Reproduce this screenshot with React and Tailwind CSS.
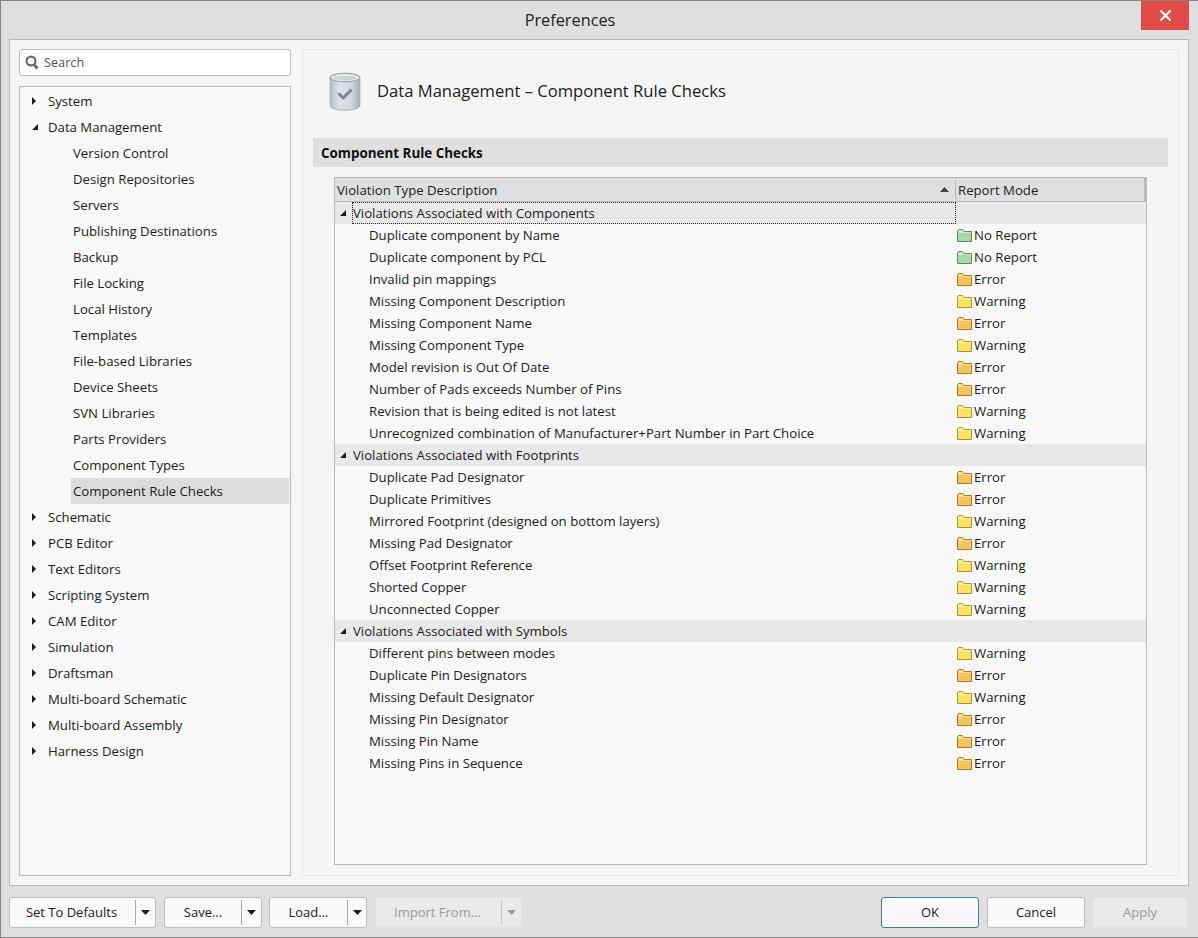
import React from "react";

const FONT = "font-['Open_Sans','Noto_Sans',sans-serif]";

const tree = [
  ["System", 0, "r"],
  ["Data Management", 0, "d"],
  ["Version Control", 1],
  ["Design Repositories", 1],
  ["Servers", 1],
  ["Publishing Destinations", 1],
  ["Backup", 1],
  ["File Locking", 1],
  ["Local History", 1],
  ["Templates", 1],
  ["File-based Libraries", 1],
  ["Device Sheets", 1],
  ["SVN Libraries", 1],
  ["Parts Providers", 1],
  ["Component Types", 1],
  ["Component Rule Checks", 1, null, true],
  ["Schematic", 0, "r"],
  ["PCB Editor", 0, "r"],
  ["Text Editors", 0, "r"],
  ["Scripting System", 0, "r"],
  ["CAM Editor", 0, "r"],
  ["Simulation", 0, "r"],
  ["Draftsman", 0, "r"],
  ["Multi-board Schematic", 0, "r"],
  ["Multi-board Assembly", 0, "r"],
  ["Harness Design", 0, "r"],
];

const groups = [
  ["Violations Associated with Components", [
    ["Duplicate component by Name", "N"],
    ["Duplicate component by PCL", "N"],
    ["Invalid pin mappings", "E"],
    ["Missing Component Description", "W"],
    ["Missing Component Name", "E"],
    ["Missing Component Type", "W"],
    ["Model revision is Out Of Date", "E"],
    ["Number of Pads exceeds Number of Pins", "E"],
    ["Revision that is being edited is not latest", "W"],
    ["Unrecognized combination of Manufacturer+Part Number in Part Choice", "W"],
  ]],
  ["Violations Associated with Footprints", [
    ["Duplicate Pad Designator", "E"],
    ["Duplicate Primitives", "E"],
    ["Mirrored Footprint (designed on bottom layers)", "W"],
    ["Missing Pad Designator", "E"],
    ["Offset Footprint Reference", "W"],
    ["Shorted Copper", "W"],
    ["Unconnected Copper", "W"],
  ]],
  ["Violations Associated with Symbols", [
    ["Different pins between modes", "W"],
    ["Duplicate Pin Designators", "E"],
    ["Missing Default Designator", "W"],
    ["Missing Pin Designator", "E"],
    ["Missing Pin Name", "E"],
    ["Missing Pins in Sequence", "E"],
  ]],
];

const modes = {
  N: { label: "No Report", fill: "#a9d8a4", top: "#cbe9c7", line: "#5c8a60" },
  E: { label: "Error", fill: "#f9c459", top: "#fddc8e", line: "#a87a22" },
  W: { label: "Warning", fill: "#fbe35e", top: "#fdf09a", line: "#a8962a" },
};

function Folder({ mode }) {
  const m = modes[mode];
  return (
    <svg width="15" height="13" viewBox="0 0 15 13" className="shrink-0">
      <path d="M0.5 12.5V1.5L1.5 0.5H5.5L7 2.5H14.5V12.5Z" fill={m.fill} stroke={m.line} strokeWidth="1" />
      <path d="M1 4H14V3H6.8L5.3 1H1.7L1 1.7Z" fill={m.top} />
    </svg>
  );
}

function ArrowRight() {
  return (
    <svg width="4" height="8" viewBox="0 0 4 8"><path d="M0 0L4 4L0 8Z" fill="#1c1c1c" /></svg>
  );
}

function ArrowDown() {
  return (
    <svg width="6" height="6" viewBox="0 0 6 6"><path d="M6 0V6H0Z" fill="#1c1c1c" /></svg>
  );
}

function Cylinder() {
  return (
    <svg width="32" height="39" viewBox="1 0 34 42" className="shrink-0">
      <defs>
        <linearGradient id="cyl" x1="0" x2="1" y1="0" y2="0">
          <stop offset="0" stopColor="#b4bac2" />
          <stop offset="0.3" stopColor="#dfe3e8" />
          <stop offset="0.7" stopColor="#d5d9df" />
          <stop offset="1" stopColor="#a9afb7" />
        </linearGradient>
      </defs>
      <path d="M2 6V36C2 39 9 41 18 41S34 39 34 36V6Z" fill="url(#cyl)" stroke="#a4a9b0" strokeWidth="1" />
      <ellipse cx="18" cy="6" rx="16" ry="4.5" fill="#eef0f2" stroke="#9ea3aa" strokeWidth="1.2" />
      <ellipse cx="18" cy="6.5" rx="13" ry="2.8" fill="#cfd3d8" />
      <path d="M11 23L16 28L25 19" fill="none" stroke="#7f858c" strokeWidth="3.2" />
    </svg>
  );
}

function SplitButton({ label, width, labelW, disabled, extra = "", labelExtra = "" }) {
  return (
    <div
      className={`flex h-[31px] items-center rounded-[3px] border text-[13px] ${extra} ${
        disabled ? "border-[#e2e3e4] bg-[#e9eaeb] text-[#9a9a9a]" : "border-[#bdbdbd] bg-[#fafafa] text-[#1a1a1a]"
      }`}
      style={{ width }}
    >
      <span className={`text-center ${labelExtra}`} style={{ width: labelW }}>{label}</span>
      <span className={`h-[25px] w-px ${disabled ? "bg-[#c9c9c9]" : "bg-[#a9a9a9]"}`} />
      <span className="flex flex-1 justify-center">
        <svg width="9" height="5" viewBox="0 0 9 5"><path d="M0 0H9L4.5 5Z" fill={disabled ? "#9a9a9a" : "#1c1c1c"} /></svg>
      </span>
    </div>
  );
}

function Button({ label, variant, extra = "" }) {
  const cls =
    variant === "ok"
      ? "border-[#3a7fb0] bg-[#fafafa] text-[#1a1a1a]"
      : variant === "off"
      ? "border-[#e2e3e4] bg-[#e9eaeb] text-[#9a9a9a]"
      : "border-[#bdbdbd] bg-[#fafafa] text-[#1a1a1a]";
  return (
    <div className={`flex h-[31px] items-center justify-center rounded-[3px] border text-[13px] ${cls} ${extra}`}>
      {label}
    </div>
  );
}

export default function App() {
  return (
    <div className={`flex h-[938px] w-[1198px] flex-col border border-r-0 border-[#858585] bg-[#dfdfdf] text-[#1c1c1c] ${FONT}`}>
      {/* Title bar */}
      <div className="flex h-[38px] shrink-0 items-start pr-[9px]">
        <div className="flex h-[38px] flex-1 items-center justify-center pr-[2px] text-[16.3px] text-[#222]">Preferences</div>
        <div className="flex h-[29px] w-[48px] items-center justify-center bg-[#e04c44]">
          <svg width="13" height="13" viewBox="0 0 13 13"><path d="M1.5 1.5L11.5 11.5M11.5 1.5L1.5 11.5" stroke="#fff" strokeWidth="2.2" /></svg>
        </div>
      </div>

      {/* Body */}
      <div className="mr-[9px] ml-2 flex h-[847px] shrink-0 gap-[11px] border border-[#b9b9b9] bg-[#f5f5f5] pt-[9px] pr-[9px] pb-[9px] pl-[9px]">
        {/* Left */}
        <div className="flex w-[272px] shrink-0 flex-col gap-[10px]">
          <div className="flex h-[27px] items-center gap-[5px] rounded-[3px] border border-[#bdbdbd] bg-white pl-[5px] text-[12.7px] text-[#555]">
            <svg width="14" height="15" viewBox="0 0 14 15">
              <circle cx="6" cy="6" r="4.4" fill="none" stroke="#6b6b6b" strokeWidth="2.2" />
              <path d="M9 9.5L12.5 13.5" stroke="#6b6b6b" strokeWidth="2.8" />
            </svg>
            Search
          </div>
          <div className="flex-1 border border-[#b9b9b9] bg-[#f8f8f8] pt-px text-[13.2px]">
            {tree.map(([label, depth, arrow, selected]) => (
              <div key={label} className="flex h-[26px] items-center">
                {depth === 0 ? (
                  <div className="flex items-center pl-[12px]">
                    <span className="flex w-[16px] items-center">
                      {arrow === "r" ? <ArrowRight /> : <ArrowDown />}
                    </span>
                    <span className="pt-[2px]">{label}</span>
                  </div>
                ) : (
                  <div className={`ml-[51px] mr-px flex h-[26px] flex-1 items-center pt-[2px] pl-[2px] ${selected ? "bg-[#dcdcdc]" : ""}`}>
                    {label}
                  </div>
                )}
              </div>
            ))}
          </div>
        </div>

        {/* Right */}
        <div className="flex flex-1 flex-col border border-[#e6e6e6] px-[10px] pt-[20px] pb-[10px]">
          <div className="flex h-[43px] shrink-0 items-center gap-[16px] pl-[16px] text-[16.6px]">
            <Cylinder />
            <span>Data Management – Component Rule Checks</span>
          </div>
          <div className="mt-[25px] flex h-[29px] shrink-0 items-center bg-[#dfdfdf] pt-[2px] pl-[8px] text-[13.4px] font-bold text-[#111]">
            Component Rule Checks
          </div>
          <div className="mx-[21px] mt-[10px] flex-1 border border-[#b9b9b9] bg-[#f8f8f8] text-[13.2px]">
            <div className="flex h-[24px] items-center border-r-[2px] border-b border-[#b9b9b9] bg-[#dfdfdf]">
              <span className="flex-1 pt-[2px] pl-[2px]">Violation Type Description</span>
              <svg width="9" height="5" viewBox="0 0 9 5" className="mr-[6px]"><path d="M0 5H9L4.5 0Z" fill="#444" /></svg>
              <span className="h-[20px] w-px bg-[#b9b9b9]" />
              <span className="w-[188px] pt-[2px] pl-[2px]">Report Mode</span>
            </div>
            {groups.map(([name, rows], gi) => (
              <div key={name}>
                <div className="flex h-[22px] items-center bg-[#e8e8e8] pl-[5px]">
                  <ArrowDown />
                  <span
                    className={`ml-[6px] flex h-[22px] w-[604px] items-center pt-[2px] pl-px ${
                      gi === 0 ? "outline-1 -outline-offset-1 outline-dotted outline-[#222]" : ""
                    }`}
                  >
                    {name}
                  </span>
                </div>
                {rows.map(([label, mode]) => (
                  <div key={label} className="flex h-[22px] items-center">
                    <span className="w-[622px] shrink-0 pt-[2px] pl-[34px]">{label}</span>
                    <Folder mode={mode} />
                    <span className="ml-[2px] pt-[2px]">{modes[mode].label}</span>
                  </div>
                ))}
              </div>
            ))}
          </div>
        </div>
      </div>

      {/* Footer */}
      <div className="flex flex-1 items-start pt-[11px] pr-[10px] pl-2">
        <div className="flex">
          <SplitButton label="Set To Defaults" width={147} labelW={125} labelExtra="pr-[2px]" />
          <SplitButton label="Save..." width={98} labelW={76} extra="ml-[8px]" />
          <SplitButton label="Load..." width={98} labelW={77} extra="ml-[7px]" />
          <SplitButton label="Import From..." width={147} labelW={125} disabled extra="ml-[8px]" labelExtra="pr-[2px]" />
        </div>
        <div className="ml-auto flex">
          <Button label="OK" variant="ok" extra="w-[98px]" />
          <Button label="Cancel" extra="ml-[8px] w-[98px]" />
          <Button label="Apply" variant="off" extra="ml-[7px] w-[96px]" />
        </div>
      </div>
    </div>
  );
}
